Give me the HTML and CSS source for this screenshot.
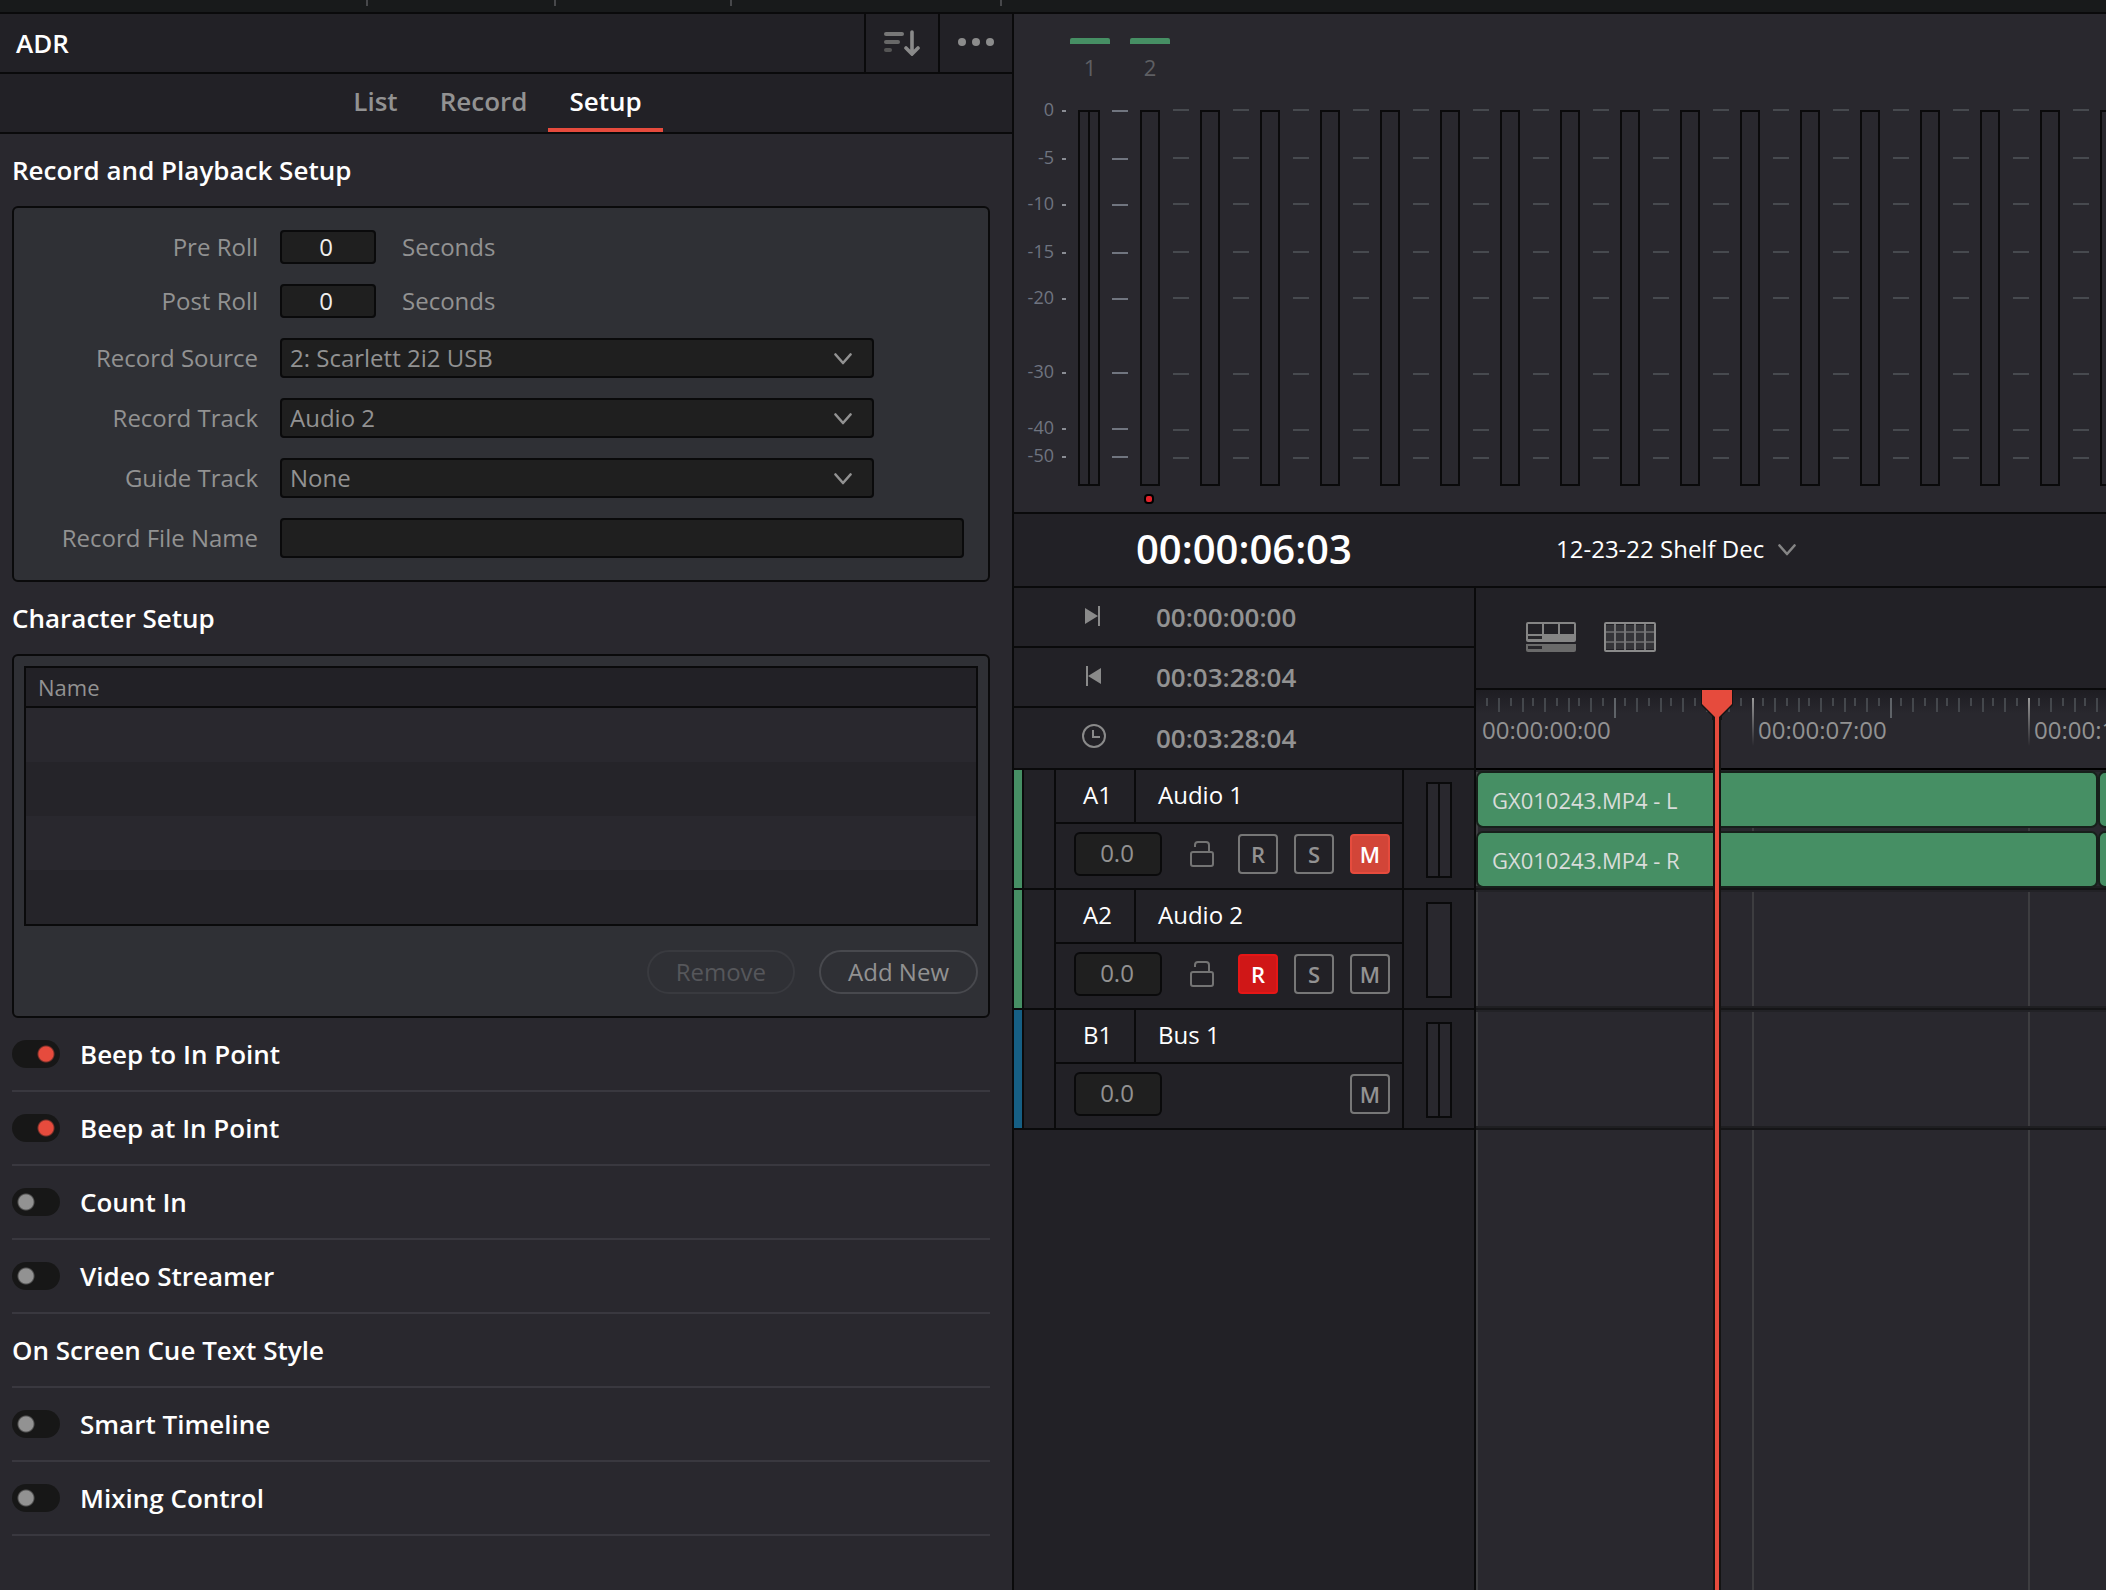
FILE: index.html
```html
<!DOCTYPE html>
<html lang="en">
<head>
<meta charset="utf-8">
<meta name="viewport" content="width=device-width, initial-scale=1">
<title>ADR Setup</title>
<link rel="stylesheet" href="styles.css">
</head>
<body>
<svg class="defs" aria-hidden="true">
  <symbol id="chevron" viewBox="0 0 18 14"><path d="M1.5 3.5 9 12 16.5 3.5" fill="none" stroke="currentColor" stroke-width="2.6" stroke-linecap="round" stroke-linejoin="round"/></symbol>
  <symbol id="lock" viewBox="0 0 24 26"><path d="M5 6V4q0-3 3-3h8q3 0 3 3v7M3 11h18q2 0 2 2v10q0 2-2 2H3q-2 0-2-2V13q0-2 2-2z" fill="none" stroke="currentColor" stroke-width="2"/></symbol>
  <symbol id="marks-main" viewBox="0 0 16 376"><path d="M0 1h16M0 49h16M0 95h16M0 143h16M0 189h16M0 263h16M0 319h16M0 347h16" stroke="currentColor" stroke-width="2"/></symbol>
  <symbol id="marks" viewBox="0 0 16 376"><path d="M0 1h16M0 49h16M0 95h16M0 143h16M0 189h16M0 265h16M0 321h16M0 349h16" stroke="currentColor" stroke-width="2"/></symbol>
  <symbol id="ruler-ticks" viewBox="0 0 276 30"><path d="M11 8v8M35 8v8M57 8v8M81 8v8M103 8v8M127 8v8M149 8v8M173 8v8M195 8v8M219 8v8M241 8v8M265 8v8M23 8v14M47 8v14M69 8v14M93 8v14M115 8v14M161 8v14M185 8v14M207 8v14M231 8v14M253 8v14" stroke="#44474c" stroke-width="2"/><path d="M139 8v20" stroke="#5f6368" stroke-width="2"/></symbol>
</svg>

<div class="strip"><span></span><span></span><span></span><span></span></div>

<div class="workspace">
  <section class="adr">
    <header class="adr-head">
      <h1>ADR</h1>
      <button type="button" aria-label="Sort">
        <svg width="36" height="26" viewBox="0 0 36 26" fill="none" stroke-linecap="round" stroke-width="4"><path d="M2 4h16" stroke="#777"/><path d="M2 12h12" stroke="#686868"/><path d="M2 20h4" stroke="#555"/><path d="M28 2v21M22 18l6 6 6-6" stroke="#8a8a8a" stroke-width="3.6"/></svg>
      </button>
      <button type="button" aria-label="Options">
        <svg width="36" height="10" viewBox="0 0 36 10" fill="#8c8c8c"><circle cx="4" cy="4" r="4"/><circle cx="18" cy="4" r="4"/><circle cx="32" cy="4" r="4"/></svg>
      </button>
    </header>
    <nav class="tabs">
      <button type="button">List</button>
      <button type="button">Record</button>
      <button type="button" class="active">Setup</button>
    </nav>

    <div class="adr-body">
      <h2>Record and Playback Setup</h2>
      <form class="box setup">
        <label for="pre">Pre Roll</label>
        <div class="field"><input class="num" id="pre" type="text" value="0"><span>Seconds</span></div>
        <label for="post">Post Roll</label>
        <div class="field"><input class="num" id="post" type="text" value="0"><span>Seconds</span></div>
        <label for="source">Record Source</label>
        <div class="select"><select id="source"><option>2: Scarlett 2i2 USB</option></select><svg><use href="#chevron"/></svg></div>
        <label for="track">Record Track</label>
        <div class="select"><select id="track"><option>Audio 2</option></select><svg><use href="#chevron"/></svg></div>
        <label for="guide">Guide Track</label>
        <div class="select"><select id="guide"><option>None</option></select><svg><use href="#chevron"/></svg></div>
        <label for="file">Record File Name</label>
        <input class="file" id="file" type="text">
      </form>

      <h2>Character Setup</h2>
      <div class="box characters">
        <table>
          <thead><tr><th scope="col">Name</th></tr></thead>
          <tbody><tr><td></td></tr><tr><td></td></tr><tr><td></td></tr><tr><td></td></tr></tbody>
        </table>
        <div class="actions">
          <button type="button" disabled>Remove</button>
          <button type="button">Add New</button>
        </div>
      </div>

      <label class="option"><input type="checkbox" checked>Beep to In Point</label>
      <label class="option"><input type="checkbox" checked>Beep at In Point</label>
      <label class="option"><input type="checkbox">Count In</label>
      <label class="option"><input type="checkbox">Video Streamer</label>
      <h3 class="option">On Screen Cue Text Style</h3>
      <label class="option"><input type="checkbox">Smart Timeline</label>
      <label class="option"><input type="checkbox">Mixing Control</label>
    </div>
  </section>

  <main class="edit">
    <section class="meters">
      <ul class="scale"><li>0</li><li>-5</li><li>-10</li><li>-15</li><li>-20</li><li>-30</li><li>-40</li><li>-50</li></ul>
      <div class="channel first used"><b>1</b><div class="well"><i class="stereo"></i><svg><use href="#marks-main"/></svg></div></div>
      <div class="channel used"><b>2</b><div class="well"><i></i><svg><use href="#marks"/></svg></div><em></em></div>
      <div class="channel"><b></b><div class="well"><i></i><svg><use href="#marks"/></svg></div></div>
      <div class="channel"><b></b><div class="well"><i></i><svg><use href="#marks"/></svg></div></div>
      <div class="channel"><b></b><div class="well"><i></i><svg><use href="#marks"/></svg></div></div>
      <div class="channel"><b></b><div class="well"><i></i><svg><use href="#marks"/></svg></div></div>
      <div class="channel"><b></b><div class="well"><i></i><svg><use href="#marks"/></svg></div></div>
      <div class="channel"><b></b><div class="well"><i></i><svg><use href="#marks"/></svg></div></div>
      <div class="channel"><b></b><div class="well"><i></i><svg><use href="#marks"/></svg></div></div>
      <div class="channel"><b></b><div class="well"><i></i><svg><use href="#marks"/></svg></div></div>
      <div class="channel"><b></b><div class="well"><i></i><svg><use href="#marks"/></svg></div></div>
      <div class="channel"><b></b><div class="well"><i></i><svg><use href="#marks"/></svg></div></div>
      <div class="channel"><b></b><div class="well"><i></i><svg><use href="#marks"/></svg></div></div>
      <div class="channel"><b></b><div class="well"><i></i><svg><use href="#marks"/></svg></div></div>
      <div class="channel"><b></b><div class="well"><i></i><svg><use href="#marks"/></svg></div></div>
      <div class="channel"><b></b><div class="well"><i></i><svg><use href="#marks"/></svg></div></div>
      <div class="channel"><b></b><div class="well"><i></i><svg><use href="#marks"/></svg></div></div>
      <div class="channel"><b></b><div class="well"><i></i><svg><use href="#marks"/></svg></div></div>
    </section>

    <header class="transport">
      <div class="timecode">00:00:06:03</div>
      <button type="button" class="title">12-23-22 Shelf Dec<svg><use href="#chevron"/></svg></button>
    </header>

    <div class="editor">
      <section class="heads">
        <div class="time"><svg width="24" height="26" viewBox="0 0 24 26" fill="#8a8a8a"><path d="M3 4l13 8-13 8zM16 2h2v20h-2z"/></svg>00:00:00:00</div>
        <div class="time"><svg width="24" height="26" viewBox="0 0 24 26" fill="#8a8a8a"><path d="M19 4L6 12l13 8zM4 2h2v20H4z"/></svg>00:03:28:04</div>
        <div class="time last"><svg width="24" height="28" viewBox="0 0 24 28" fill="none" stroke="#8a8a8a" stroke-width="2"><circle cx="12" cy="12" r="11"/><path d="M11 6v7h7"/></svg>00:03:28:04</div>

        <div class="track">
          <div class="color"></div><div class="handle"></div>
          <div class="info">
            <div class="name"><span>A1</span><span>Audio 1</span></div>
            <div class="controls"><input type="text" value="0.0" aria-label="Audio 1 level"><button type="button" class="lock" aria-label="Lock"><svg><use href="#lock"/></svg></button><button type="button" class="key">R</button><button type="button" class="key">S</button><button type="button" class="key mute-on">M</button></div>
          </div>
          <div class="level"><i class="stereo"></i></div>
        </div>
        <div class="track">
          <div class="color"></div><div class="handle"></div>
          <div class="info">
            <div class="name"><span>A2</span><span>Audio 2</span></div>
            <div class="controls"><input type="text" value="0.0" aria-label="Audio 2 level"><button type="button" class="lock" aria-label="Lock"><svg><use href="#lock"/></svg></button><button type="button" class="key rec-on">R</button><button type="button" class="key">S</button><button type="button" class="key">M</button></div>
          </div>
          <div class="level"><i></i></div>
        </div>
        <div class="track bus">
          <div class="color"></div><div class="handle"></div>
          <div class="info">
            <div class="name"><span>B1</span><span>Bus 1</span></div>
            <div class="controls"><input type="text" value="0.0" aria-label="Bus 1 level"><button type="button" class="key">M</button></div>
          </div>
          <div class="level"><i class="stereo"></i></div>
        </div>
      </section>

      <section class="timeline">
        <div class="tools">
          <button type="button" aria-label="Track view"><svg width="50" height="30" viewBox="0 0 50 30"><path d="M1 13V2q0-1 1-1h46q1 0 1 1v11M17 1v12M33 1v12" fill="none" stroke="#858585" stroke-width="2"/><path d="M0 12h50v6q0 2-2 2H2q-2 0-2-2z" fill="#858585"/><path d="M0 22h50v6q0 2-2 2H2q-2 0-2-2z" fill="#6a6a6a"/><path d="M2 14h14v3H2zM2 24h14v3H2z" fill="#28272b"/></svg></button>
          <button type="button" aria-label="Grid view"><svg width="52" height="30" viewBox="0 0 52 30" fill="none" stroke-width="2"><path d="M2 3h48v24H2z" fill="#343438"/><path d="M1 10h50M1 20h50" stroke="#626264"/><path d="M11 1v28M21 1v28M31 1v28M41 1v28" stroke="#757577"/><rect x="1" y="1" width="50" height="28" rx="1" stroke="#8a8a8a"/></svg></button>
        </div>
        <div class="canvas">
          <div class="ruler">
            <div class="mark"><svg><use href="#ruler-ticks"/></svg><span>00:00:00:00</span></div>
            <div class="mark"><svg><use href="#ruler-ticks"/></svg><span>00:00:07:00</span></div>
            <div class="mark"><svg><use href="#ruler-ticks"/></svg><span>00:00:14:00</span></div>
          </div>
          <div class="lanes">
            <div class="lane">
              <div class="clips"><div class="clip" style="width:622px">GX010243.MP4 - L</div><div class="clip" style="width:276px"></div></div>
              <div class="clips"><div class="clip" style="width:622px">GX010243.MP4 - R</div><div class="clip" style="width:276px"></div></div>
            </div>
            <div class="lane"></div>
            <div class="lane"></div>
          </div>
          <div class="playhead"><svg width="34" height="30" viewBox="0 0 34 30"><path d="M1 0h32v15l-11 11v4H12v-4L1 15z" fill="#141414"/><path d="M2 0h30v14L19 27v3h-4v-3L2 14z" fill="#e64b3d"/></svg></div>
        </div>
      </section>
    </div>
  </main>
</div>
</body>
</html>
```
FILE: styles.css
```css
:root {
  --line: #0a0a0b;
  --panel: #29282e;
  --dark: #222126;
  --box: #2f3035;
  --well: #1f1f1f;
  --text: #929292;
  --green: #468f64;
  --red: #e64b3d;
}

* { box-sizing: border-box; }

body {
  margin: 0;
  min-height: 100vh;
  display: flex;
  flex-direction: column;
  background: var(--panel);
  color: var(--text);
  font: 24px/32px "Open Sans", "Noto Sans", sans-serif;
  overflow-x: hidden;
}

button, input, select { font: inherit; color: inherit; margin: 0; }
button { background: none; border: 0; padding: 0; }
h1, h2, h3, ul { margin: 0; padding: 0; list-style: none; }
svg { display: block; flex: none; }
.defs { position: absolute; width: 0; height: 0; }

.strip {
  display: grid;
  grid-template-columns: 366px 188px 176px 270px;
  height: 14px;
  background: #181a1b;
  border-bottom: 2px solid var(--line);
}
.strip span { height: 6px; border-right: 2px solid #47484b; margin-right: -2px; }

.workspace {
  flex: 1;
  display: grid;
  grid-template-columns: minmax(0, 1014fr) minmax(0, 1092fr);
}

/* ADR panel */
.adr { border-right: 2px solid var(--line); }
.adr-head {
  display: flex;
  height: 60px;
  background: var(--dark);
  border-bottom: 2px solid var(--line);
}
h1 {
  flex: 1;
  padding-left: 16px;
  font-size: 26px;
  font-weight: 600;
  line-height: 58px;
  color: #fff;
}
.adr-head button {
  width: 74px;
  border-left: 2px solid var(--line);
  display: grid;
  place-items: center;
}
.tabs {
  display: flex;
  justify-content: center;
  height: 60px;
  padding-right: 17px;
  background: var(--dark);
  border-bottom: 2px solid var(--line);
}
.tabs button {
  padding: 0 21px;
  border-bottom: 4px solid transparent;
  font-size: 26px;
  font-weight: 600;
}
.tabs .active { color: #fff; border-color: var(--red); }

.adr-body { padding: 0 22px 0 12px; }
h2, .option { font-size: 26px; font-weight: 600; color: #fff; }
h2 { line-height: 72px; }
.box {
  background: var(--box);
  border: 2px solid var(--line);
  border-radius: 6px;
}
.setup {
  display: grid;
  grid-template-columns: 244px 1fr;
  gap: 20px 22px;
  align-items: center;
  padding: 22px 24px 22px 0;
}
.setup > label { text-align: right; }
.setup input, .setup select {
  height: 40px;
  width: 100%;
  background: var(--well);
  border: 2px solid var(--line);
  border-radius: 4px;
  padding: 0 8px;
}
.field { display: flex; align-items: center; gap: 26px; }
.setup .num { width: 96px; height: 34px; padding: 0 12px 2px 8px; text-align: center; color: #eee; }
.select { display: grid; align-items: center; margin-right: 90px; }
.select > * { grid-area: 1 / 1; }
.setup select { appearance: none; }
.select svg { width: 18px; height: 14px; justify-self: end; margin-right: 22px; pointer-events: none; }

.characters { padding: 10px; }
table {
  width: 100%;
  border: 2px solid var(--line);
  border-collapse: separate;
  border-spacing: 0;
}
th {
  height: 40px;
  padding: 0 12px;
  background: var(--dark);
  border-bottom: 2px solid var(--line);
  font-size: 22px;
  font-weight: 400;
  line-height: 32px;
  text-align: left;
}
td { height: 54px; padding: 0; background: var(--panel); }
tr:nth-child(even) td { background: #252429; }
.actions { display: flex; justify-content: flex-end; gap: 24px; padding: 24px 0 12px; }
.actions button {
  height: 44px;
  padding: 0 27px;
  border: 2px solid #48494e;
  border-radius: 22px;
}
.actions button:disabled { color: #56575b; border-color: #393a3f; }

.option {
  display: flex;
  align-items: center;
  gap: 20px;
  height: 74px;
  border-bottom: 2px solid #39383f;
}
.option input {
  appearance: none;
  width: 48px;
  height: 28px;
  border-radius: 14px;
  background: radial-gradient(circle at 14px 14px, #929292 7px, #171717 9px);
}
.option input:checked { background: radial-gradient(circle at 34px 14px, var(--red) 7px, #171717 9px); }

/* Meters */
.edit { display: flex; flex-direction: column; min-width: 0; }
.meters {
  display: flex;
  height: 500px;
  padding-top: 24px;
  border-bottom: 2px solid var(--line);
  overflow: hidden;
}
.scale {
  flex: none;
  display: grid;
  grid-template-rows: 48px 46px 48px 46px 74px 56px 28px 24px;
  width: 52px;
  margin: 59px 4px 0 0;
  color: #6f7480;
  font-size: 18px;
  line-height: 24px;
  align-content: start;
}
.scale li {
  height: 24px;
  padding-right: 12px;
  text-align: right;
  background: linear-gradient(#8a8d94, #8a8d94) right 13px / 4px 2px no-repeat;
}
.channel { flex: 0 0 60px; }
.channel b {
  display: block;
  width: 40px;
  height: 72px;
  padding-top: 13px;
  font-size: 22px;
  font-weight: 400;
  text-align: center;
  color: #5e5f63;
}
.used b { background: linear-gradient(var(--green), var(--green)) top / 40px 6px no-repeat; border-radius: 2px; }
.well { display: flex; gap: 13px; padding-left: 10px; }
.well i, .level i { display: block; border: 2px solid var(--line); }
.well i { width: 20px; height: 376px; }
.well svg { width: 16px; height: 376px; margin-top: -1px; color: #474a4f; }
.first .well { gap: 12px; padding-left: 8px; }
.first .well i { width: 22px; }
.first .well svg { margin-top: 0; color: #70757f; }
.stereo { background: linear-gradient(var(--line), var(--line)) 8px 0 / 2px 100% no-repeat; }
.channel em {
  display: block;
  width: 10px;
  height: 10px;
  margin: 8px 0 0 14px;
  background: #e5222a;
  border: 2px solid #000;
  border-radius: 4px;
}

/* Transport */
.transport {
  display: flex;
  align-items: center;
  height: 74px;
  padding-bottom: 2px;
  background: var(--dark);
  border-bottom: 2px solid var(--line);
}
.timecode {
  flex: 0 0 462px;
  padding-left: 122px;
  font-size: 40px;
  font-weight: 600;
  line-height: 48px;
  color: #fff;
}
.title { display: flex; align-items: center; gap: 14px; padding-left: 80px; color: #fff; white-space: nowrap; }
.title svg { width: 18px; height: 14px; color: #858585; }

/* Track headers */
.editor { flex: 1; display: flex; min-height: 0; }
.heads { flex: 0 0 462px; background: var(--dark); border-right: 2px solid var(--line); }
.time {
  display: flex;
  align-items: center;
  gap: 50px;
  height: 60px;
  padding-left: 68px;
  border-bottom: 2px solid var(--line);
  font-size: 26px;
  font-weight: 600;
}
.time.last { height: 62px; }
.track { display: flex; height: 120px; border-bottom: 2px solid var(--line); }
.color { width: 8px; background: var(--green); }
.bus .color { background: #165f84; }
.handle { width: 34px; border: solid var(--line); border-width: 0 2px; }
.info { flex: 1; border-right: 2px solid var(--line); }
.name { display: flex; height: 54px; border-bottom: 2px solid var(--line); color: #fff; line-height: 50px; }
.name span { padding-left: 22px; }
.name span:first-child { width: 80px; padding-left: 27px; border-right: 2px solid var(--line); }
.controls { display: flex; align-items: center; gap: 16px; height: 60px; padding: 0 12px 0 18px; }
.controls input {
  width: 88px;
  height: 44px;
  margin-right: auto;
  padding: 0 4px 3px 2px;
  background: var(--well);
  border: 2px solid var(--line);
  border-radius: 6px;
  text-align: center;
}
.lock { margin-right: 8px; color: #747474; }
.lock svg { width: 24px; height: 26px; }
.key {
  width: 40px;
  height: 40px;
  border: 2px solid #777;
  border-radius: 4px;
  font-size: 22px;
  font-weight: 600;
  line-height: 28px;
}
.mute-on { background: #d24538; border-color: var(--red); color: #fff; }
.rec-on { background: #d01717; border-color: #e61616; color: #fff; }
.level { width: 70px; padding: 12px 0 0 22px; }
.level i { width: 26px; height: 96px; background-color: var(--panel); }
.level .stereo { background-position: 10px 0; }

/* Timeline */
.timeline { flex: 1; min-width: 0; display: flex; flex-direction: column; overflow: hidden; }
.tools {
  display: flex;
  align-items: center;
  gap: 28px;
  height: 102px;
  padding: 0 0 2px 50px;
  background: var(--dark);
  border-bottom: 2px solid var(--line);
}
.canvas { flex: 1; display: flex; flex-direction: column; position: relative; }
.ruler {
  display: flex;
  height: 80px;
  background: linear-gradient(#1e1d22, var(--panel) 24px);
  border-bottom: 2px solid #000;
  overflow: hidden;
}
.mark { flex: 0 0 276px; display: grid; align-items: center; }
.mark > * { grid-area: 1 / 1; }
.mark svg { width: 276px; height: 30px; align-self: start; }
.mark span { padding: 2px 0 0 6px; }
.mark + .mark { background: linear-gradient(#9a9a9a, transparent) 0 8px / 2px 48px no-repeat; }
.lanes {
  flex: 1;
  background: repeating-linear-gradient(90deg, #3d3d40 0 2px, transparent 2px 276px);
}
.lane {
  height: 120px;
  border-bottom: 2px solid #151517;
  box-shadow: inset 0 -2px #1f1f22, inset 0 2px #222226;
}
.clips { display: flex; height: 60px; padding-top: 1px; }
.clip {
  flex: none;
  height: 57px;
  padding-left: 14px;
  background: var(--green);
  border: 2px solid #17201b;
  border-radius: 7px;
  font-size: 22px;
  line-height: 55px;
  color: #d8dcd9;
}
.playhead {
  position: absolute;
  top: 0;
  bottom: 0;
  left: 224px;
  width: 34px;
  background: linear-gradient(90deg, #141414 2px, var(--red) 2px 6px, #141414 6px) center / 8px 100% no-repeat;
}
```
